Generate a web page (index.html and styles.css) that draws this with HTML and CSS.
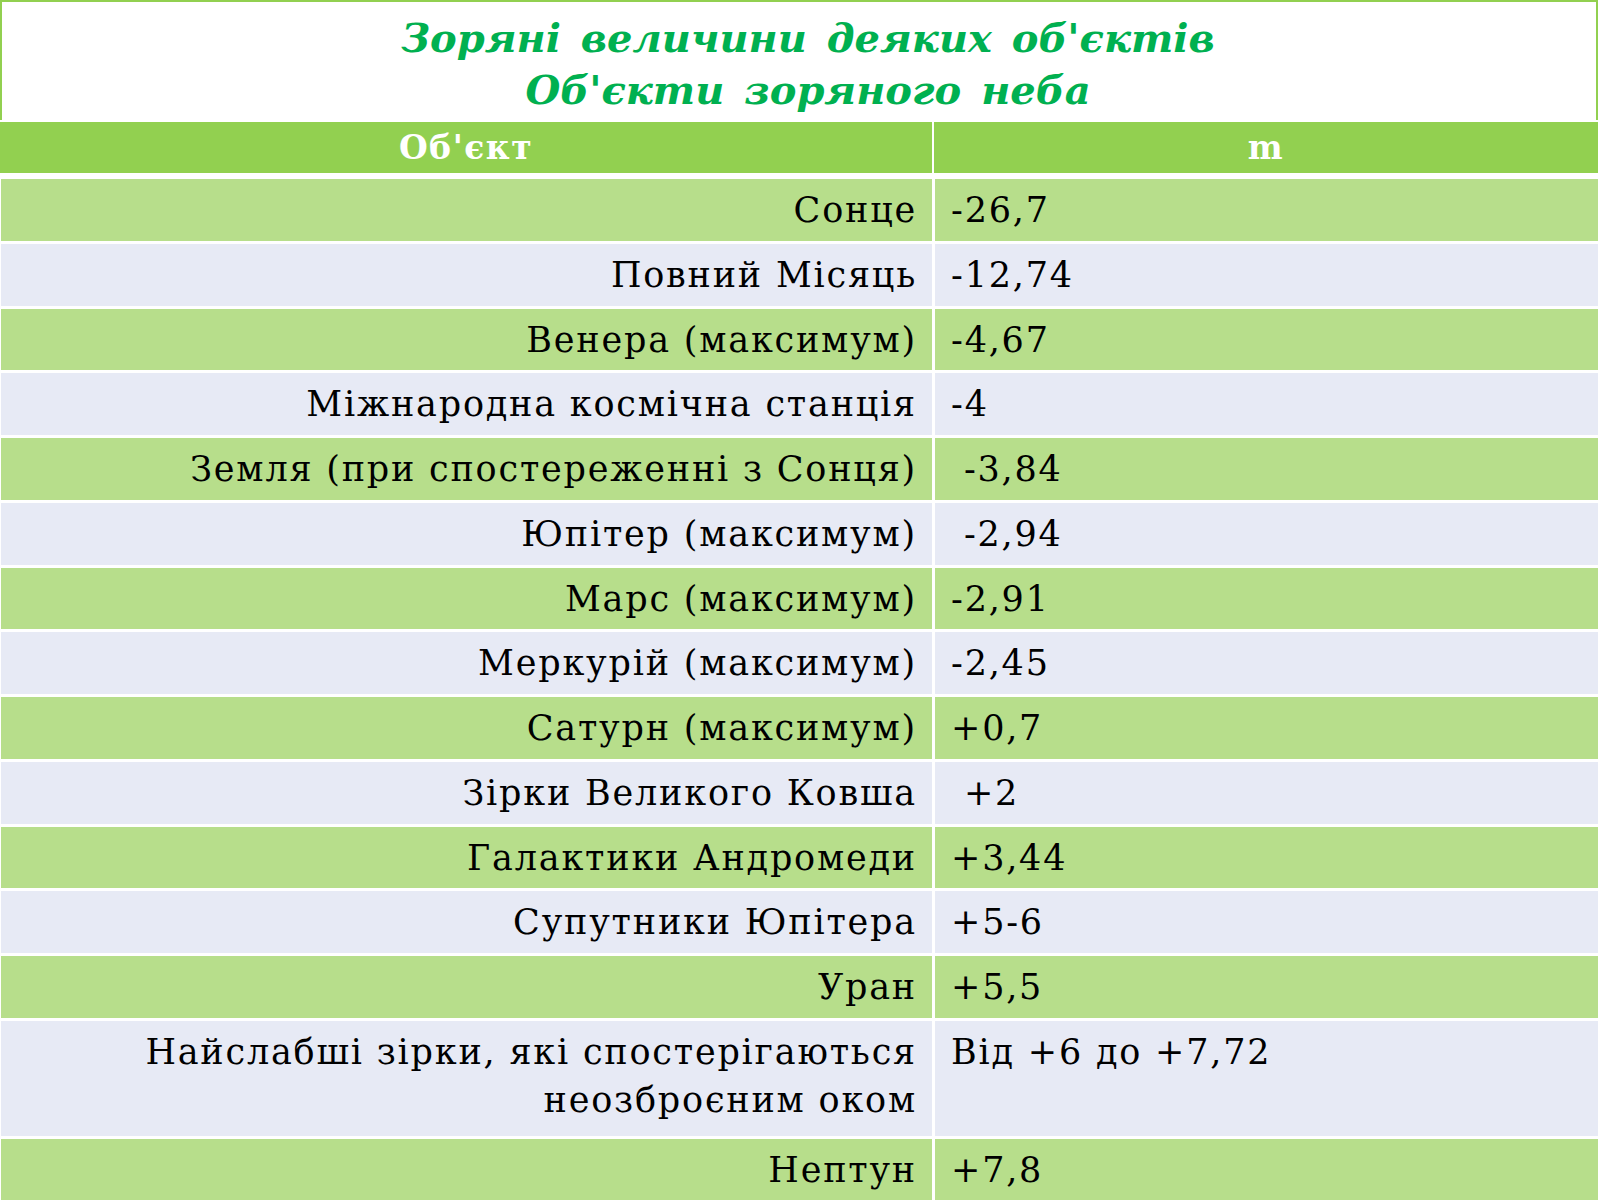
FILE: index.html
```html
<!DOCTYPE html>
<html lang="uk">
<head>
<meta charset="utf-8">
<title>Зоряні величини деяких об'єктів</title>
<link rel="stylesheet" href="styles.css">
</head>
<body>
<div class="page">
  <div class="title">
    <div class="title-line">Зоряні величини деяких об'єктів</div>
    <div class="title-line">Об'єкти зоряного неба</div>
  </div>
  <div class="table">
    <div class="head">
      <div class="hcell">Об'єкт</div>
      <div class="hcell">m</div>
    </div>
    <div class="body">
      <div class="row g"><div class="name">Сонце</div><div class="val">-26,7</div></div>
      <div class="row l"><div class="name">Повний Місяць</div><div class="val">-12,74</div></div>
      <div class="row g"><div class="name">Венера (максимум)</div><div class="val">-4,67</div></div>
      <div class="row l"><div class="name">Міжнародна космічна станція</div><div class="val">-4</div></div>
      <div class="row g"><div class="name">Земля (при спостереженні з Сонця)</div><div class="val">&nbsp;-3,84</div></div>
      <div class="row l"><div class="name">Юпітер (максимум)</div><div class="val">&nbsp;-2,94</div></div>
      <div class="row g"><div class="name">Марс (максимум)</div><div class="val">-2,91</div></div>
      <div class="row l"><div class="name">Меркурій (максимум)</div><div class="val">-2,45</div></div>
      <div class="row g"><div class="name">Сатурн (максимум)</div><div class="val">+0,7</div></div>
      <div class="row l"><div class="name">Зірки Великого Ковша</div><div class="val">&nbsp;+2</div></div>
      <div class="row g"><div class="name">Галактики Андромеди</div><div class="val">+3,44</div></div>
      <div class="row l"><div class="name">Супутники Юпітера</div><div class="val">+5-6</div></div>
      <div class="row g"><div class="name">Уран</div><div class="val">+5,5</div></div>
      <div class="row l tall"><div class="name">Найслабші зірки, які спостерігаються<br>неозброєним оком</div><div class="val">Від +6 до +7,72</div></div>
      <div class="row g"><div class="name">Нептун</div><div class="val">+7,8</div></div>
    </div>
  </div>
</div>
</body>
</html>
```
FILE: styles.css
```css
html, body {
  margin: 0;
  padding: 0;
  background: #ffffff;
}

.page {
  width: 1598px;
  font-family: "DejaVu Serif", "Liberation Serif", serif;
}

.title {
  border: 2px solid #92d050;
  border-bottom: none;
  height: 120px;
  box-sizing: border-box;
  padding: 10px 0 0 18px;
  text-align: center;
  color: #00b050;
  font-weight: bold;
  font-style: italic;
  font-size: 40px;
  line-height: 52px;
  word-spacing: 6px;
}

.table {
  display: flex;
  flex-direction: column;
}

.head {
  display: grid;
  grid-template-columns: 932px 1fr;
  column-gap: 2px;
  background: #ffffff;
  height: 51px;
  margin-top: 2px;
}

.hcell {
  background: #92d050;
  color: #ffffff;
  font-weight: bold;
  font-size: 33px;
  letter-spacing: 1.5px;
  line-height: 51px;
  text-align: center;
}

.body {
  display: flex;
  flex-direction: column;
  gap: 3px;
  margin-top: 6px;
  padding-left: 1px;
}

.row {
  display: grid;
  grid-template-columns: 931px 1fr;
  column-gap: 3px;
  height: 61.75px;
  font-size: 35px;
  letter-spacing: 1.8px;
  line-height: 48px;
  color: #000000;
}

.row.tall {
  height: 115px;
}

.name, .val {
  padding-top: 7px;
  box-sizing: border-box;
}

.name {
  text-align: right;
  padding-right: 15px;
}

.val {
  padding-left: 16px;
}

.row.g .name, .row.g .val {
  background: #b7de8b;
}

.row.l .name, .row.l .val {
  background: #e7eaf5;
}
```
